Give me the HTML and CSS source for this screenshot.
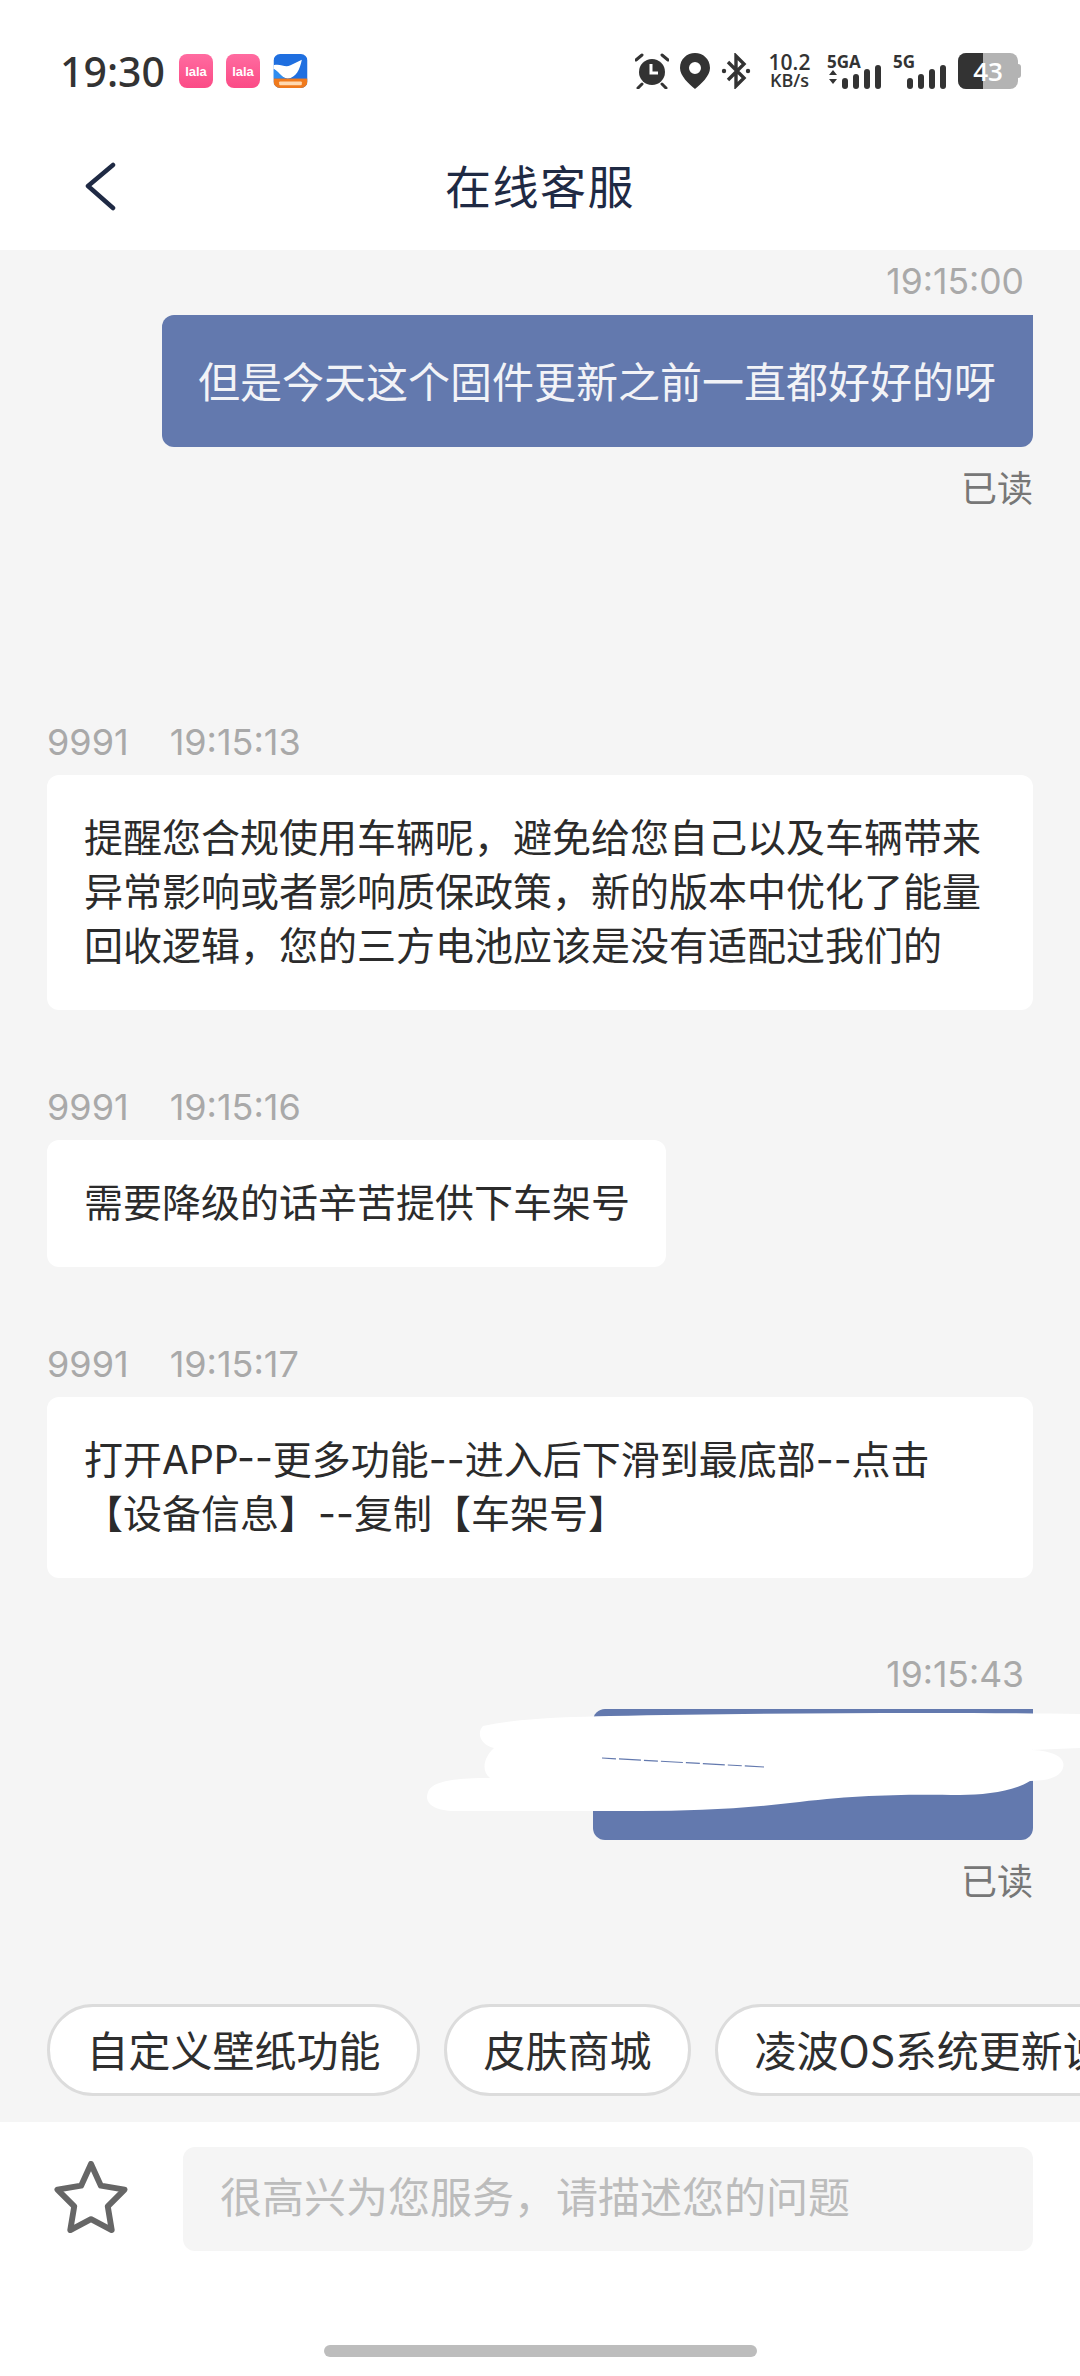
FILE: index.html
```html
<!DOCTYPE html>
<html lang="zh">
<head>
<meta charset="utf-8">
<title>在线客服</title>
<link rel="stylesheet" href="styles.css">
</head>
<body>
<div class="phone">
  <header class="top">
    <div class="status">
      <div class="status-left">
        <span class="clock">19:30</span>
        <span class="app pink">lala</span>
        <span class="app pink">lala</span>
        <svg class="app-svg" viewBox="0 0 36 36"><defs><clipPath id="r"><rect width="36" height="36" rx="7"/></clipPath></defs><g clip-path="url(#r)"><rect width="36" height="36" fill="#1f6fe0"/><path d="M0 12C8 10 12 15 18 12L30 6C28 16 24 25 15 26C8 26 5 18 0 16Z" fill="#fff"/><path d="M0 16C5 18 8 24 13 26H0Z" fill="#2f8df0"/><rect y="26" width="36" height="10" fill="#f07a1c"/><rect x="6" y="29" width="24" height="4" rx="1" fill="#ffd9b0"/></g></svg>
      </div>
      <div class="status-right">
        <svg class="si alarm" viewBox="0 0 34 36"><circle cx="17" cy="19" r="13" fill="#333"/><path d="M16 11v9h7" fill="none" stroke="#fff" stroke-width="3"/><path d="M1 7l6-5M33 7l-6-5M3 35l4-4M31 35l-4-4" stroke="#333" stroke-width="3" stroke-linecap="round"/></svg>
        <svg class="si pin" viewBox="0 0 30 36"><path fill-rule="evenodd" d="M15 0C7 0 0 6 0 15C0 23 9 31 15 36C21 31 30 23 30 15C30 6 23 0 15 0ZM15 9a6 6 0 1 1 0 12a6 6 0 0 1 0-12Z" fill="#333"/></svg>
        <svg class="si bt" viewBox="0 0 30 36"><path d="M7 9L23 25L15 33V3L23 11L7 27" fill="none" stroke="#333" stroke-width="3.4"/><circle cx="3" cy="18" r="2.2" fill="#333"/><circle cx="27" cy="18" r="2.2" fill="#333"/></svg>
        <div class="speed"><span class="val">10.2</span><span class="unit">KB/s</span></div>
        <div class="net">
          <span class="net-label">5GA</span>
          <svg viewBox="0 0 56 24" class="bars"><path d="M2 10l4-5 4 5ZM2 14l4 5 4-5Z" fill="#333"/><rect x="15" y="13" width="6" height="11" rx="3" fill="#333"/><rect x="26" y="9" width="6" height="15" rx="3" fill="#333"/><rect x="37" y="4" width="6" height="20" rx="3" fill="#333"/><rect x="48" y="0" width="6" height="24" rx="3" fill="#333"/></svg>
        </div>
        <div class="net net-b">
          <span class="net-label">5G</span>
          <svg viewBox="0 0 40 24" class="bars small"><rect x="0" y="13" width="6" height="11" rx="3" fill="#333"/><rect x="11" y="9" width="6" height="15" rx="3" fill="#333"/><rect x="22" y="4" width="6" height="20" rx="3" fill="#333"/><rect x="33" y="0" width="6" height="24" rx="3" fill="#333"/></svg>
        </div>
        <div class="battery"><span class="level"></span><span class="num">43</span><i class="cap"></i></div>
      </div>
    </div>
    <nav class="nav">
      <svg class="back" viewBox="0 0 34 50"><path d="M29 3L4 24L29 46" fill="none" stroke="#1f2a44" stroke-width="4.5" stroke-linecap="round" stroke-linejoin="round"/></svg>
      <h1 class="title">在线客服</h1>
    </nav>
  </header>

  <main class="chat">
    <div class="out first">
      <div class="out-time">19:15:00</div>
      <div class="bubble-out">但是今天这个固件更新之前一直都好好的呀</div>
      <div class="read">已读</div>
    </div>

    <div class="in gap-a">
      <div class="meta"><span>9991</span><span>19:15:13</span></div>
      <div class="bubble-in">提醒您合规使用车辆呢，避免给您自己以及车辆带来<br>异常影响或者影响质保政策，新的版本中优化了能量<br>回收逻辑，您的三方电池应该是没有适配过我们的</div>
    </div>
    <div class="in gap-b">
      <div class="meta"><span>9991</span><span>19:15:16</span></div>
      <div class="bubble-in fit">需要降级的话辛苦提供下车架号</div>
    </div>
    <div class="in gap-b">
      <div class="meta"><span>9991</span><span>19:15:17</span></div>
      <div class="bubble-in">打开APP--更多功能--进入后下滑到最底部--点击<br>【设备信息】--复制【车架号】</div>
    </div>

    <div class="out gap-b">
      <div class="out-time">19:15:43</div>
      <div class="bubble-out redacted"></div>
      <div class="read">已读</div>
    </div>

    <svg class="scribble" viewBox="420 1710 660 105"><path d="M483 1726C520 1718 570 1717 610 1716C760 1713 950 1712 1080 1714V1748L1032 1750C1055 1751 1066 1758 1063 1768C1060 1778 1045 1781 1030 1781C1015 1791 985 1795 960 1795C900 1794 855 1795 790 1803C740 1809 690 1811 640 1811L455 1811C432 1811 424 1802 428 1792C432 1782 450 1778 490 1778C480 1770 485 1756 494 1748C479 1744 477 1732 483 1726Z" fill="#fff"/><path d="M602 1758L764 1767" stroke="#6379ae" stroke-width="1.2" stroke-dasharray="14 3 22 3" fill="none"/></svg>

    <div class="chips">
      <span class="chip">自定义壁纸功能</span>
      <span class="chip">皮肤商城</span>
      <span class="chip">凌波OS系统更新说明</span>
    </div>
  </main>

  <footer class="composer">
    <div class="input-row">
      <svg class="star" viewBox="3 1 74 73"><path d="M40 4L50 26L74 30L57 47L61 71L40 60L19 71L23 47L6 30L30 26Z" fill="none" stroke="#666" stroke-width="6" stroke-linejoin="round"/></svg>
      <div class="input">很高兴为您服务，请描述您的问题</div>
    </div>
    <div class="home"></div>
  </footer>
</div>
</body>
</html>
```
FILE: styles.css
```css
* { box-sizing: border-box; }
html, body { margin: 0; padding: 0; }
body { font-family: "Noto Sans CJK SC", "Noto Sans", sans-serif; background: #fff; }
.phone { width: 1080px; height: 2376px; overflow: hidden; display: flex; flex-direction: column; background: #f5f5f5; }

.top { background: #fff; height: 250px; flex: none; }
.status { height: 85px; padding: 53px 0 0 60px; display: flex; justify-content: space-between; }
.status-left { display: flex; align-items: center; height: 36px; gap: 13px; }
.clock { font-family: "Noto Sans", sans-serif; font-size: 41px; line-height: 36px; font-weight: 500; color: #333; margin-right: 1px; }
.app { width: 34px; height: 34px; border-radius: 8px; display: flex; align-items: center; justify-content: center; font: 700 13px "Liberation Sans", sans-serif; color: #fff; }
.pink { background: linear-gradient(#ff6ba0, #fb4b86); }
.app-svg { width: 35px; height: 34px; }
.status-right { display: flex; align-items: flex-start; height: 36px; margin-right: 62px; }
.si { display: block; flex: none; }
.alarm { width: 34px; height: 36px; margin-right: 11px; }
.pin { width: 30px; height: 36px; margin-right: 11px; }
.bt { width: 30px; height: 36px; margin-right: 16px; }
.speed { display: flex; flex-direction: column; width: 45px; color: #333; margin-right: 15px; text-align: center; font-family: "Open Sans", sans-serif; font-weight: 600; white-space: nowrap; }
.val { display: block; height: 18px; font-size: 21px; line-height: 18px; }
.unit { display: block; height: 18px; font-size: 18px; line-height: 18px; }
.net { position: relative; width: 55px; height: 36px; margin-right: 11px; }
.net-b { width: 54px; margin-right: 11px; }
.net-label { position: absolute; left: 0; top: 0; font: 700 17px/18px "Open Sans", sans-serif; color: #333; }
.bars { position: absolute; left: 0; bottom: 0; width: 56px; height: 24px; }
.bars.small { width: 40px; left: 14px; }
.battery { position: relative; width: 60px; height: 36px; border-radius: 8px; background: #b3b3b3; color: #fff; }
.level { position: absolute; left: 0; top: 0; bottom: 0; width: 25px; background: #333; border-radius: 8px 0 0 8px; }
.num { position: absolute; left: 0; right: 0; top: 0; text-align: center; font: 600 26px/36px "Open Sans", sans-serif; }
.cap { position: absolute; right: -3px; top: 11px; width: 3px; height: 14px; border-radius: 0 3px 3px 0; background: #b3b3b3; }

.nav { position: relative; height: 165px; display: flex; align-items: center; justify-content: center; padding-top: 32px; }
.back { position: absolute; left: 84px; top: 77px; width: 34px; height: 50px; }
.title { margin: 0; font-size: 46px; font-weight: 400; color: #1f2a44; letter-spacing: 1.5px; }

.chat { position: relative; flex: 1; padding: 0 47px; display: flex; flex-direction: column; }
.out { display: flex; flex-direction: column; align-items: flex-end; }
.first { margin-top: 8px; }
.out-time { font: 400 35.5px/48px "Inter", sans-serif; color: #a9a9a9; padding-right: 9px; }
.bubble-out { margin-top: 9px; width: 871px; height: 132px; background: #6379ae; color: #f2f3f7; border-radius: 12px 0 12px 12px; font-size: 42px; line-height: 129px; padding-left: 36px; }
.read { margin-top: 13px; font-size: 36px; line-height: 52px; color: #777; }
.in { display: flex; flex-direction: column; align-items: flex-start; }
.gap-a { margin-top: 206px; }
.gap-b { margin-top: 73px; }
.meta { display: flex; gap: 41px; font: 400 36px/48px "Inter", sans-serif; color: #a9a9a9; }
.bubble-in { margin-top: 9px; width: 986px; background: #fff; border-radius: 12px; font-family: "Inter", "Noto Sans CJK SC", sans-serif; font-size: 39px; line-height: 54px; color: #2b2b2b; padding: 36px 37px 37px; white-space: nowrap; }
.bubble-in.fit { width: 619px; }
.redacted { width: 440px; margin-top: 10px; height: 131px; }
.scribble { position: absolute; left: 420px; top: 1460px; width: 660px; height: 105px; }

.chips { margin-top: 99px; display: flex; gap: 24px; white-space: nowrap; }
.chip { flex: none; height: 92px; border: 3px solid #dcdcdc; border-radius: 46px; background: #fff; padding: 0 36.5px; font-size: 42px; line-height: 84px; color: #2e2e2e; }

.composer { flex: none; height: 254px; background: #fff; padding-top: 25px; }
.input-row { display: flex; align-items: center; padding-left: 53px; }
.star { width: 76px; height: 72px; flex: none; margin-right: 54px; margin-bottom: 4px; }
.input { width: 850px; height: 104px; background: #f5f5f5; border-radius: 12px; font-size: 42px; line-height: 96px; color: #bcbcbc; padding-left: 37px; }
.home { width: 433px; height: 12px; margin: 94px auto 0; border-radius: 6px; background: #bdbdbd; }
```
